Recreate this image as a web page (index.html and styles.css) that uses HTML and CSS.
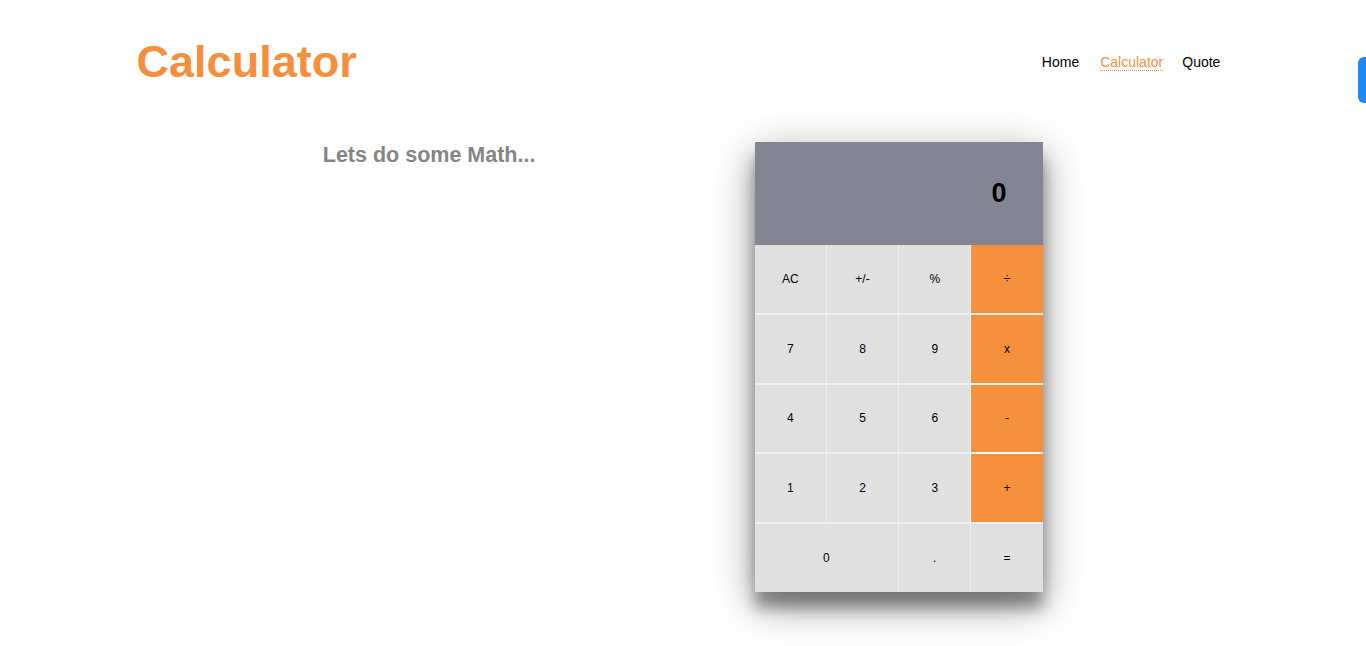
FILE: index.html
```html
<!DOCTYPE html>
<html lang="en">
<head>
<meta charset="utf-8">
<title>Calculator</title>
<link rel="stylesheet" href="styles.css">
</head>
<body>
<header class="header">
  <h1 class="logo">Calculator</h1>
  <nav class="nav">
    <a class="nav-link" href="#">Home</a>
    <a class="nav-link active" href="#">Calculator</a>
    <a class="nav-link" href="#">Quote</a>
  </nav>
</header>
<main class="main">
  <section class="intro">
    <h3 class="intro-title">Lets do some Math...</h3>
  </section>
  <section class="calc">
    <div class="display">0</div>
    <div class="keys">
      <button class="key">AC</button>
      <button class="key">+/-</button>
      <button class="key">%</button>
      <button class="key op">÷</button>
      <button class="key">7</button>
      <button class="key">8</button>
      <button class="key">9</button>
      <button class="key op">x</button>
      <button class="key">4</button>
      <button class="key">5</button>
      <button class="key">6</button>
      <button class="key op">-</button>
      <button class="key">1</button>
      <button class="key">2</button>
      <button class="key">3</button>
      <button class="key op">+</button>
      <button class="key wide">0</button>
      <button class="key">.</button>
      <button class="key">=</button>
    </div>
  </section>
</main>
<div class="side-tab"></div>
</body>
</html>
```
FILE: styles.css
```css
* { box-sizing: border-box; }
html, body { margin: 0; padding: 0; background: #fff; }
body {
  font-family: "Liberation Sans", Arial, sans-serif;
  color: #000;
  min-height: 646px;
}
.header {
  width: 80%;
  margin: 0 auto;
  height: 124px;
  display: flex;
  align-items: center;
  justify-content: space-between;
  padding-right: 9px;
}
.logo {
  margin: 0;
  font-size: 45px;
  line-height: 52px;
  font-weight: bold;
  color: #f58f3e;
}
.nav {
  display: flex;
  gap: 19px;
  font-size: 14px;
}
.nav-link {
  color: #000;
  text-decoration: none;
}
.nav-link:first-child { margin-right: 2px; }
.nav-link.active {
  color: #f58f3e;
  text-decoration: underline dotted;
  text-decoration-thickness: 1px;
  text-underline-offset: 3px;
}
.main {
  width: 80%;
  margin: 18px auto 0;
  padding-bottom: 60px;
  display: flex;
  align-items: flex-start;
}
.intro {
  flex: 0 0 585px;
  text-align: center;
}
.intro-title {
  margin: 0;
  font-size: 21.5px;
  line-height: 26px;
  font-weight: bold;
  color: #858585;
}
.calc {
  margin-left: 33px;
  width: 288px;
  box-shadow: 0 12px 40px rgba(0, 0, 0, 0.4), 0 16px 14px rgba(0, 0, 0, 0.35);
}
.display {
  height: 103px;
  background: #848592;
  display: flex;
  align-items: center;
  justify-content: flex-end;
  padding-right: 36px;
  font-size: 27px;
  font-weight: bold;
}
.keys {
  display: grid;
  grid-template-columns: repeat(4, 1fr);
  grid-auto-rows: 67.8px;
  column-gap: 1px;
  row-gap: 2px;
  background: #f0f0f0;
}
.key {
  border: 0;
  margin: 0;
  padding: 0;
  background: #e0e0e0;
  font-family: "Liberation Sans", Arial, sans-serif;
  font-size: 12px;
  color: #000;
}
.key.op { background: #f5903d; }
.key.wide { grid-column: span 2; }
.side-tab {
  position: fixed;
  top: 57px;
  right: -10px;
  width: 18px;
  height: 46px;
  border-radius: 6px;
  background: #1e88f5;
}
```
